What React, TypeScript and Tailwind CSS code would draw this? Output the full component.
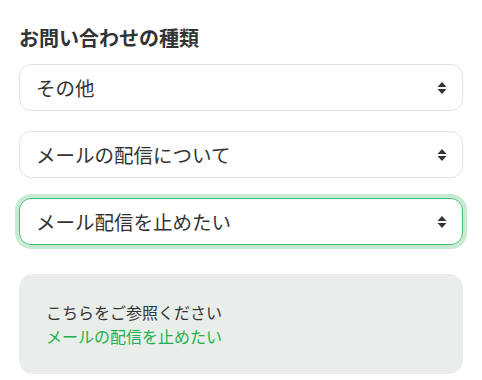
import { useState } from "react";

const FONT = "font-['Noto_Sans_CJK_JP','Noto_Sans',sans-serif]";

const OPTIONS = [
	{ id: "category", value: "その他", choices: ["会員登録について", "ご注文について", "その他"] },
	{ id: "topic", value: "メールの配信について", choices: ["ログインについて", "メールの配信について"] },
	{ id: "detail", value: "メール配信を止めたい", choices: ["メールが届かない", "メール配信を止めたい"] },
];

function SortArrows() {
	return (
		<svg
			className="pointer-events-none absolute right-[16px] top-1/2 h-[13px] w-[10px] -translate-y-1/2 text-[#333]"
			viewBox="0 0 10 13"
			aria-hidden="true"
		>
			<path d="M5 0.5 L9.5 5.5 H0.5 Z" fill="currentColor" />
			<path d="M5 12.5 L9.5 7.5 H0.5 Z" fill="currentColor" />
		</svg>
	);
}

function SelectBox({
	value,
	choices,
	focused,
}: {
	value: string;
	choices: string[];
	focused?: boolean;
}) {
	const [current, setCurrent] = useState(value);
	return (
		<div
			className={
				focused
					? "relative rounded-[12px] ring-[4px] ring-[#c6ebd2]"
					: "relative rounded-[12px]"
			}
		>
			<select
				value={current}
				onChange={(e) => setCurrent(e.target.value)}
				className={
					"h-[47px] w-full appearance-none rounded-[12px] border bg-white pl-[16px] pr-10 text-[19.5px] text-[#333] outline-none " +
					(focused ? "border-[#46bb6b]" : "border-[#dfe3e1]")
				}
			>
				{choices.map((c) => (
					<option key={c} value={c}>
						{c}
					</option>
				))}
			</select>
			<SortArrows />
		</div>
	);
}

export default function App() {
	return (
		<div className={`min-h-[380px] bg-white px-[19px] pt-[24px] ${FONT}`}>
			<p className="text-[20px] font-semibold leading-[28px] text-[#333]">
				お問い合わせの種類
			</p>
			<div className="mt-[12px] grid gap-[20px]">
				{OPTIONS.map((opt, i) => (
					<SelectBox
						key={opt.id}
						value={opt.value}
						choices={opt.choices}
						focused={i === OPTIONS.length - 1}
					/>
				))}
			</div>
			<div className="mt-[29px] flex h-[100px] flex-col justify-center rounded-[14px] bg-[#e9eeeb] px-[27px]">
				<p className="text-[16px] leading-[24px] text-[#333]">
					こちらをご参照ください
				</p>
				<a href="#" className="text-[16px] leading-[24px] text-[#22ae4c]">
					メールの配信を止めたい
				</a>
			</div>
		</div>
	);
}
